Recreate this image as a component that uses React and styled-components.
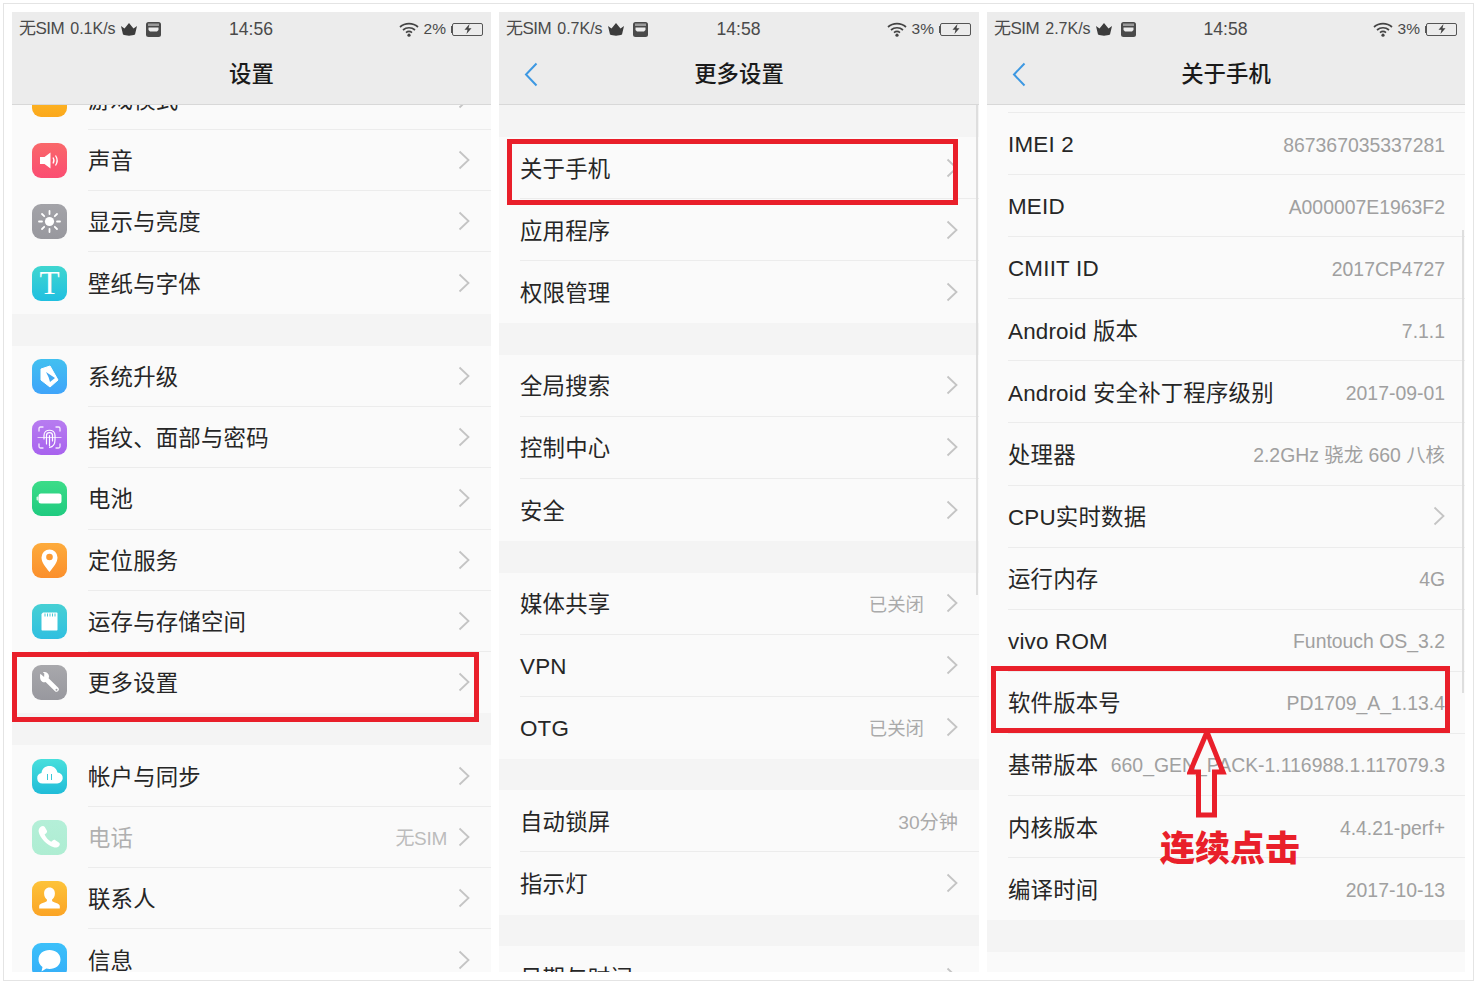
import React from "react";
import styled, { createGlobalStyle } from "styled-components";

const RED = "#e91f2a";

const Global = createGlobalStyle`
  html, body { margin: 0; padding: 0; background: #fff; }
  * { box-sizing: border-box; }
  body { font-family: "Liberation Sans", "Noto Sans CJK SC", sans-serif; }
`;

const glyphs = {
  game: <rect x="9" y="0" width="17" height="8" fill="#fff" opacity="0" />,
  sound: (
    <g>
      <path d="M8 14h4.500L18.500 9.500v16L12.500 21H8z" fill="#fff" />
      <path d="M21 14.500c1.200 1.800 1.200 4.200 0 6M23.500 12.500c2 3 2 7 0 10" fill="none" stroke="#fff" strokeWidth="1.300" />
    </g>
  ),
  sun: (
    <g stroke="#fff" strokeWidth="1.800" strokeLinecap="round">
      <circle cx="17.500" cy="17.500" r="4.600" fill="#fff" stroke="none" />
      <path d="M17.500 7v3M17.500 25v3M7 17.500h3M25 17.500h3M10 10l2.200 2.200M22.800 22.800l2.200 2.200M25 10l-2.200 2.200M12.200 22.800L10 25" />
    </g>
  ),
  upgrade: (
    <g>
      <path d="M9 10L18 7L26 21L18 28L9 21z" fill="#fff" strokeLinejoin="round" stroke="#fff" strokeWidth="1" />
      <path d="M14 13L23 19L18 23L16.500 18z" fill="#42a8f2" />
    </g>
  ),
  finger: (
    <g fill="none" stroke="#fff" strokeLinecap="round">
      <path d="M7 11V8.500C7 7.500 7.500 7 8.500 7H11M24 7h2.500c1 0 1.500.5 1.500 1.500V11M7 24v2.500c0 1 .5 1.500 1.500 1.500H11M24 28h2.500c1 0 1.500-.5 1.500-1.500V24" strokeWidth="1.300" opacity=".85" />
      <path d="M12 19v-3.500c0-7 11-7 11 0V20c0 5-3 7-5.500 7.500M14.500 24v-8.500c0-3.800 6-3.800 6 0V21M17.500 26V15.500" strokeWidth="1.200" />
      <path d="M6 17.500h23" strokeWidth="1.200" opacity=".7" />
    </g>
  ),
  battery: (
    <g>
      <rect x="4.500" y="15.500" width="2" height="4" rx="1" fill="#d6f5e3" />
      <rect x="6.500" y="12.500" width="23" height="10" rx="2.500" fill="#fff" />
    </g>
  ),
  pin: (
    <g>
      <path d="M17.500 29C13.500 24 9.500 19.500 9.500 14.500a8 8 0 0 1 16 0C25.500 19.500 21.500 24 17.500 29z" fill="#fff" />
      <circle cx="17.500" cy="14" r="3.300" fill="#fb9a32" />
    </g>
  ),
  card: (
    <g>
      <path d="M11 8.500h13.500c.6 0 1 .4 1 1v16c0 .6-.4 1-1 1h-14c-.6 0-1-.4-1-1V10z" fill="#fff" />
      <path d="M13 9.500v3M15.500 9.500v3M18 9.500v3M20.500 9.500v3M23 9.500v3" stroke="#4cc9d6" strokeWidth="1" />
    </g>
  ),
  wrench: (
    <g>
      <path d="M8.300 8.700l3.800 3.200.2-3.500-1.500-1.200c3-1 6 .8 6.200 3.800 0 .9-.1 1.500-.4 2.200L26.500 23a2.400 2.400 0 0 1-3.200 3.400L13.600 17c-3.400 1.100-6.500-1.700-5.300-8.300z" fill="#fff" />
      <circle cx="24.500" cy="24.800" r="1" fill="#a0a0a6" />
    </g>
  ),
  cloud: (
    <g>
      <path d="M10.500 24.500a5.300 5.300 0 0 1-1-10.500c.5-4.400 3.800-7 8-7s7 2.600 8 6.500a5.500 5.500 0 0 1-.5 11z" fill="#fff" />
      <path d="M15.500 15v6M19.500 15v6" stroke="#3cc8d8" strokeWidth="1" />
    </g>
  ),
  phone: (
    <path d="M9 6.500c1.500-1 3-.8 3.800.6l2 3.400c.5 1 .3 2-.6 2.700l-1.600 1.300c1 2.700 4.100 6 6.600 7.300l1.500-1.400c.8-.7 1.800-.8 2.700-.2l3.400 2.200c1.200.8 1.400 2.300.3 3.500-1.400 1.500-3.300 2-5.300 1.400C14.500 25 8 18 6.700 12 6.300 10 7 7.900 9 6.500z" fill="#fff" />
  ),
  contact: (
    <path d="M17.500 6.500c3.400 0 5.400 2.600 5.400 5.900 0 2.800-1.300 5-2.800 6.200v1.500c.7 1.400 7.700 2.200 7.700 5v2.400H7.200v-2.400c0-2.800 7-3.600 7.700-5v-1.500c-1.500-1.200-2.800-3.400-2.800-6.200 0-3.300 2-5.900 5.400-5.900z" fill="#fff" />
  ),
  message: (
    <path d="M17.500 7c6 0 11 3.800 11 9.500S23.500 26 17.500 26c-1.100 0-2.200-.1-3.200-.4L9.500 28.500l1-4.600C8 22.200 6.500 19.600 6.500 16.500 6.500 10.800 11.500 7 17.500 7z" fill="#fff" />
  ),
};

const settingsGroups = [
  [
    { icon: "game", from: "#ffc02a", to: "#fba81c", label: "游戏模式" },
    { icon: "sound", from: "#f9686a", to: "#fb4d72", label: "声音" },
    { icon: "sun", from: "#a3a3a8", to: "#98989e", label: "显示与亮度" },
    { icon: "T", from: "#3fd6d0", to: "#20bfe0", label: "壁纸与字体" },
  ],
  [
    { icon: "upgrade", from: "#42c0f0", to: "#3fa4fa", label: "系统升级" },
    { icon: "finger", from: "#b77cf0", to: "#a862ee", label: "指纹、面部与密码" },
    { icon: "battery", from: "#3cdc88", to: "#1fcb80", label: "电池" },
    { icon: "pin", from: "#fdab3c", to: "#fb8f2c", label: "定位服务" },
    { icon: "card", from: "#46d0d4", to: "#30bfe0", label: "运存与存储空间" },
    { icon: "wrench", from: "#a8a8ac", to: "#98989e", label: "更多设置", marked: true },
  ],
  [
    { icon: "cloud", from: "#48dfdc", to: "#20bcd8", label: "帐户与同步" },
    { icon: "phone", from: "#b4efd8", to: "#aeedd2", label: "电话", value: "无SIM", dim: true },
    { icon: "contact", from: "#fdc33a", to: "#fba425", label: "联系人" },
    { icon: "message", from: "#3cc0fa", to: "#35aef8", label: "信息" },
  ],
];

const moreGroups = [
  [{ label: "关于手机", marked: true }, { label: "应用程序" }, { label: "权限管理" }],
  [{ label: "全局搜索" }, { label: "控制中心" }, { label: "安全" }],
  [{ label: "媒体共享", value: "已关闭" }, { label: "VPN", latin: true }, { label: "OTG", value: "已关闭", latin: true }],
  [{ label: "自动锁屏", value: "30分钟", noArrow: true }, { label: "指示灯" }],
  [{ label: "日期与时间" }],
];

const aboutRows = [
  { label: "IMEI 2", value: "867367035337281", latin: true },
  { label: "MEID", value: "A000007E1963F2", latin: true },
  { label: "CMIIT ID", value: "2017CP4727", latin: true },
  { label: "Android 版本", value: "7.1.1" },
  { label: "Android 安全补丁程序级别", value: "2017-09-01" },
  { label: "处理器", value: "2.2GHz 骁龙 660 八核" },
  { label: "CPU实时数据", arrow: true },
  { label: "运行内存", value: "4G" },
  { label: "vivo ROM", value: "Funtouch OS_3.2", latin: true },
  { label: "软件版本号", value: "PD1709_A_1.13.4", marked: true },
  { label: "基带版本", value: "660_GEN_PACK-1.116988.1.117079.3" },
  { label: "内核版本", value: "4.4.21-perf+" },
  { label: "编译时间", value: "2017-10-13" },
];

const Chevron = () => (
  <ChevronSvg viewBox="0 0 12 20">
    <path d="M1.500 1.500L10.500 10L1.500 18.500" fill="none" stroke="#c4c4c4" strokeWidth="1.800" />
  </ChevronSvg>
);

const StatusBar = ({ speed, time, percent }) => (
  <Status>
    <StatusLeft>
      <Sim>无SIM</Sim>
      <Speed>{speed}</Speed>
      <svg width="16" height="13" viewBox="0 0 16 13">
        <path d="M0 3l3.500 2.500L8 0l4.500 5.500L16 3l-2 8.500c-3 1.500-9 1.500-12 0z" fill="#3c3c3c" />
      </svg>
      <StoreIcon width="15" height="15" viewBox="0 0 15 15">
        <rect width="15" height="15" rx="2.500" fill="#4a4a4a" />
        <rect x="2" y="1.500" width="11" height="2.500" fill="#9a9a9a" />
        <path d="M2.500 5.500h10v2.500l-1.500 1.500h-7L2.500 8z" fill="#ececec" />
      </StoreIcon>
    </StatusLeft>
    <Time>{time}</Time>
    <StatusRight>
      <svg width="20" height="15" viewBox="0 0 20 15">
        <g fill="none" stroke="#444" strokeWidth="1.700">
          <path d="M1 5c5-4.500 13-4.500 18 0" />
          <path d="M4 8c3.500-3 8.500-3 12 0" />
          <path d="M7 10.700c1.800-1.500 4.200-1.500 6 0" />
        </g>
        <circle cx="10" cy="13.200" r="1.600" fill="#444" />
      </svg>
      <Percent>{percent}</Percent>
      <BatteryNub />
      <Battery>
        <svg width="10" height="10" viewBox="0 0 10 10">
          <path d="M6.500 0L1.500 5.700h3L3.500 10l5-5.700h-3z" fill="#444" />
        </svg>
      </Battery>
    </StatusRight>
  </Status>
);

const Header = ({ speed, time, percent, title, back }) => (
  <HeaderWrap>
    <StatusBar speed={speed} time={time} percent={percent} />
    <TitleBar>
      {back && (
        <BackIcon viewBox="0 0 14 25">
          <path d="M12.500 1.500L2 12.500L12.500 23.500" fill="none" stroke="#3d98e2" strokeWidth="2" />
        </BackIcon>
      )}
      <Title>{title}</Title>
    </TitleBar>
  </HeaderWrap>
);

const SettingsPanel = () => (
  <Panel $width={479}>
    <Header speed="0.1K/s" time="14:56" percent="2%" title="设置" />
    <Scroller>
      <ScrollInner $offset={-36.5}>
        {settingsGroups.map((group, g) => (
          <React.Fragment key={g}>
            {g > 0 && <GroupGap $height={32} />}
            {group.map((row, i) => (
              <IconRow key={row.label}>
                <AppIcon $from={row.from} $to={row.to}>
                  {row.icon === "T" ? (
                    <SerifT>T</SerifT>
                  ) : (
                    <svg width="35" height="35" viewBox="0 0 35 35">
                      {glyphs[row.icon]}
                    </svg>
                  )}
                </AppIcon>
                <RowBody $last={i === group.length - 1} $pad={21}>
                  <Label $dim={row.dim}>{row.label}</Label>
                  <RowEnd>
                    {row.value && <DimValue>{row.value}</DimValue>}
                    <Chevron />
                  </RowEnd>
                </RowBody>
                {row.marked && <MarkBox $top={0} $left={0} $width={467} $height={70} />}
              </IconRow>
            ))}
          </React.Fragment>
        ))}
      </ScrollInner>
    </Scroller>
  </Panel>
);

const MorePanel = () => (
  <Panel $width={480}>
    <Header speed="0.7K/s" time="14:58" percent="3%" title="更多设置" back />
    <Scroller>
      <GroupGap $height={32} />
      {moreGroups.map((group, g) => (
        <React.Fragment key={g}>
          {g > 0 && <GroupGap $height={31.5} />}
          {group.map((row, i) => (
            <TextRow key={row.label} $indent={21}>
              <RowBody $last={i === group.length - 1} $pad={21}>
                <Label $latin={row.latin}>{row.label}</Label>
                <RowEnd>
                  {row.value && <SmallValue $flush={row.noArrow}>{row.value}</SmallValue>}
                  {!row.noArrow && <Chevron />}
                </RowEnd>
              </RowBody>
              {row.marked && <MarkBox $top={2} $left={8} $width={451} $height={66} />}
            </TextRow>
          ))}
        </React.Fragment>
      ))}
    </Scroller>
    <ScrollThumb $top={93} $height={490} $right={1} />
  </Panel>
);

const AboutPanel = () => (
  <Panel $width={478}>
    <Header speed="2.7K/s" time="14:58" percent="3%" title="关于手机" back />
    <Scroller>
      <TopEdge />
      {aboutRows.map((row, i) => (
        <TextRow key={row.label} $indent={21}>
          <RowBody $last={i === aboutRows.length - 1} $pad={20}>
            <Label $latin={row.latin}>{row.label}</Label>
            {row.value && <AboutValue>{row.value}</AboutValue>}
            {row.arrow && <Chevron />}
          </RowBody>
          {row.marked && <MarkBox $top={-6} $left={4} $width={459} $height={67} />}
        </TextRow>
      ))}
      <GroupGap $height={31.5} />
    </Scroller>
    <ScrollThumb $top={218} $height={463} $right={1} />
    <ClickArrow width="40" height="90" viewBox="0 0 40 90">
      <path d="M20 4L36 44H27.500V87H11.500V44H3z" fill="none" stroke={RED} strokeWidth="5" />
    </ClickArrow>
    <ClickHint>连续点击</ClickHint>
  </Panel>
);

export default function App() {
  return (
    <>
      <Global />
      <Frame>
        <SettingsPanel />
        <MorePanel />
        <AboutPanel />
      </Frame>
    </>
  );
}

const Frame = styled.div`
  margin: 3px;
  width: 1471px;
  height: 978px;
  border: 1px solid #e4e4e4;
  padding: 8px;
  display: flex;
  gap: 8px;
  background: #fff;
`;

const Panel = styled.section`
  position: relative;
  width: ${(p) => p.$width}px;
  height: 960px;
  display: flex;
  flex-direction: column;
  overflow: hidden;
  background: #fafafa;
`;

const HeaderWrap = styled.header`
  position: relative;
  z-index: 2;
  flex: none;
  height: 93px;
  background: #ececec;
  border-bottom: 1px solid #d8d8d8;
`;

const Status = styled.div`
  height: 34px;
  padding: 0 8px 0 7px;
  display: grid;
  grid-template-columns: 1fr auto 1fr;
  align-items: center;
  color: #4a4a4a;
`;

const StatusLeft = styled.div`
  display: flex;
  align-items: center;
`;

const Sim = styled.span`
  font-size: 17px;
  line-height: 20px;
  letter-spacing: -0.500px;
`;

const Speed = styled.span`
  margin: 0 5px 0 6px;
  font-size: 16px;
  line-height: 20px;
`;

const StoreIcon = styled.svg`
  margin-left: 9px;
`;

const Time = styled.span`
  font-size: 17.600px;
`;

const StatusRight = styled.div`
  display: flex;
  align-items: center;
  justify-content: flex-end;
`;

const Percent = styled.span`
  margin: 0 5px 0 5px;
  font-size: 15.500px;
`;

const BatteryNub = styled.span`
  width: 1px;
  height: 7px;
  background: #555;
`;

const Battery = styled.div`
  width: 31px;
  height: 13px;
  border: 1px solid #555;
  border-radius: 2px;
  display: flex;
  align-items: center;
  justify-content: center;
`;

const TitleBar = styled.div`
  position: relative;
  height: 58px;
  padding-bottom: 6px;
  display: flex;
  align-items: center;
  justify-content: center;
`;

const Title = styled.h1`
  margin: 0;
  font-size: 22.400px;
  font-weight: 500;
  color: #1a1a1a;
`;

const BackIcon = styled.svg`
  position: absolute;
  left: 25px;
  top: 16px;
  width: 14px;
  height: 25px;
`;

const Scroller = styled.div`
  flex: 1;
  min-height: 0;
  overflow: hidden;
`;

const ScrollInner = styled.div`
  margin-top: ${(p) => p.$offset}px;
`;

const GroupGap = styled.div`
  height: ${(p) => p.$height}px;
  background: #f4f4f4;
`;

const TopEdge = styled.div`
  height: 8px;
  margin-left: 21px;
  border-bottom: 1px solid #ececec;
`;

const IconRow = styled.div`
  position: relative;
  height: 61.300px;
  padding-left: 20px;
  display: flex;
  align-items: center;
  gap: 21px;
`;

const TextRow = styled.div`
  position: relative;
  height: 62.100px;
  padding-left: ${(p) => p.$indent}px;
  display: flex;
  align-items: center;
`;

const AppIcon = styled.div`
  flex: none;
  width: 35px;
  height: 35px;
  border-radius: 9px;
  background: linear-gradient(${(p) => p.$from}, ${(p) => p.$to});
  display: flex;
  align-items: center;
  justify-content: center;
  overflow: hidden;
`;

const SerifT = styled.span`
  font-family: "Liberation Serif", serif;
  font-size: 33px;
  line-height: 35px;
  color: #fff;
`;

const RowBody = styled.div`
  flex: 1;
  min-width: 0;
  height: 100%;
  padding-right: ${(p) => p.$pad}px;
  display: flex;
  align-items: center;
  justify-content: space-between;
  border-bottom: 1px solid ${(p) => (p.$last ? "transparent" : "#ececec")};
`;

const Label = styled.span`
  padding-top: ${(p) => (p.$latin ? 3 : 4)}px;
  font-size: 22.400px;
  line-height: 30px;
  letter-spacing: 0.200px;
  white-space: nowrap;
  color: ${(p) => (p.$dim ? "#b0b0b0" : "#262626")};
`;

const RowEnd = styled.div`
  display: flex;
  align-items: center;
`;

const DimValue = styled.span`
  margin-right: 11px;
  font-size: 19px;
  letter-spacing: -0.300px;
  color: #bcbcbc;
`;

const SmallValue = styled.span`
  margin-right: ${(p) => (p.$flush ? 0 : 22)}px;
  font-size: ${(p) => (p.$flush ? 19.200 : 18.400)}px;
  color: #aaa;
`;

const AboutValue = styled.span`
  padding-top: 2px;
  font-size: 19.400px;
  line-height: 30px;
  white-space: nowrap;
  color: #a0a0a0;
`;

const ChevronSvg = styled.svg`
  flex: none;
  width: 12px;
  height: 20px;
`;

const MarkBox = styled.div`
  position: absolute;
  z-index: 1;
  top: ${(p) => p.$top}px;
  left: ${(p) => p.$left}px;
  width: ${(p) => p.$width}px;
  height: ${(p) => p.$height}px;
  border: 5px solid ${RED};
`;

const ScrollThumb = styled.div`
  position: absolute;
  top: ${(p) => p.$top}px;
  right: ${(p) => p.$right}px;
  width: 2px;
  height: ${(p) => p.$height}px;
  background: #dedede;
`;

const ClickArrow = styled.svg`
  position: absolute;
  z-index: 3;
  left: 200px;
  top: 716px;
`;

const ClickHint = styled.div`
  position: absolute;
  z-index: 3;
  left: 173px;
  top: 814px;
  font-size: 35px;
  line-height: 46px;
  font-weight: 900;
  color: ${RED};
`;
